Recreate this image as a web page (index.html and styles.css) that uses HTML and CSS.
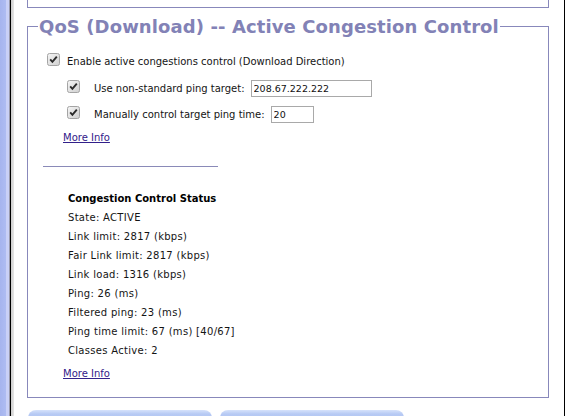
FILE: index.html
```html
<!DOCTYPE html>
<html>
<head>
<meta charset="utf-8">
<link rel="stylesheet" href="styles.css">
</head>
<body>
<div class="page">
  <div class="rail"></div>
  <div class="frame">
    <div class="prev"></div>
    <fieldset class="qos">
      <legend>QoS (Download) -- Active Congestion Control</legend>
      <div class="row r1"><svg class="cb" width="13" height="13" viewBox="0 0 13 13"><defs><linearGradient id="g1" x1="0" y1="0" x2="1" y2="1"><stop offset="0" stop-color="#f6f6f6"/><stop offset="1" stop-color="#cfcfcf"/></linearGradient></defs><rect x="0.5" y="0.5" width="12" height="12" rx="2" fill="url(#g1)" stroke="#a4a4a4"/><path d="M3.2 6.4 L5.4 8.8 L9.8 3.6" fill="none" stroke="#2b2b2b" stroke-width="1.9"/></svg><span class="lbl">Enable active congestions control (Download Direction)</span></div>
      <div class="row r2 sub"><svg class="cb" width="13" height="13" viewBox="0 0 13 13"><rect x="0.5" y="0.5" width="12" height="12" rx="2" fill="url(#g1)" stroke="#a4a4a4"/><path d="M3.2 6.4 L5.4 8.8 L9.8 3.6" fill="none" stroke="#2b2b2b" stroke-width="1.9"/></svg><span class="lbl">Use non-standard ping target:</span><input class="txt wide" type="text" value="208.67.222.222"></div>
      <div class="row r3 sub"><svg class="cb" width="13" height="13" viewBox="0 0 13 13"><rect x="0.5" y="0.5" width="12" height="12" rx="2" fill="url(#g1)" stroke="#a4a4a4"/><path d="M3.2 6.4 L5.4 8.8 L9.8 3.6" fill="none" stroke="#2b2b2b" stroke-width="1.9"/></svg><span class="lbl">Manually control target ping time:</span><input class="txt narrow" type="text" value="20"></div>
      <div class="row more-row"><a class="more" href="#">More Info</a></div>
      <hr class="sep">
      <div class="status">
        <div class="st-title">Congestion Control Status</div>
        <div class="st-line">State: ACTIVE</div>
        <div class="st-line">Link limit: 2817 (kbps)</div>
        <div class="st-line">Fair Link limit: 2817 (kbps)</div>
        <div class="st-line">Link load: 1316 (kbps)</div>
        <div class="st-line">Ping: 26 (ms)</div>
        <div class="st-line">Filtered ping: 23 (ms)</div>
        <div class="st-line">Ping time limit: 67 (ms) [40/67]</div>
        <div class="st-line">Classes Active: 2</div>
      </div>
      <div class="row more-row2"><a class="more" href="#">More Info</a></div>
    </fieldset>
    <div class="buttons"><span class="btn"></span><span class="btn"></span></div>
  </div>
</div>
</body>
</html>
```

FILE: styles.css
```css
html, body {
  margin: 0;
  padding: 0;
  background: #fff;
}
body {
  font-family: "DejaVu Sans", Verdana, sans-serif;
  font-size: 10px;
  color: #141414;
}
.page {
  display: flex;
  height: 416px;
  overflow: hidden;
}
.rail {
  width: 10px;
  flex: none;
  background: linear-gradient(to right, #a6b4ee 0, #aebcf2 6px, #c9d0f7 6px, #c9d0f7 9px, #9a9aac 9px, #9a9aac 10px);
}
.frame {
  width: 522px;
  flex: none;
  border-left: 1px solid #000;
  border-right: 1px solid #000;
  padding: 0 15px 0 16px;
  background: linear-gradient(to right, #cdcdcd 0, #e6e6e6 3px, #fff 3px) no-repeat;
}
.prev {
  height: 7px;
  border: 1px solid #8888bb;
  border-top: 0;
}
.qos {
  margin: 8px 0 0;
  padding: 0 14px 13px 10px;
  border: 1px solid #8888bb;
  min-width: 0;
}
.qos legend {
  padding: 0 1px;
  font-size: 18px;
  line-height: 21px;
  font-weight: bold;
  letter-spacing: 0.1px;
  color: #8282b6;
}
.row {
  line-height: 20px;
  white-space: nowrap;
}
.cb {
  vertical-align: baseline;
  margin-bottom: -1px;
}
.r1 {
  margin: 15px 0 0 9px;
}
.r1 .cb {
  margin-right: 7px;
}
.sub {
  margin-left: 29px;
}
.sub .cb {
  margin-right: 14px;
}
.r2 {
  margin-top: 7px;
}
.r3 {
  margin-top: 6px;
}
.txt {
  box-sizing: border-box;
  height: 17px;
  margin: 0 0 0 6px;
  padding: 0 2px;
  border: 1px solid #a9a9a9;
  font-family: "DejaVu Sans", Verdana, sans-serif;
  font-size: 9.5px;
  color: #111;
  background: #fff;
  vertical-align: baseline;
}
.wide {
  width: 121px;
}
.narrow {
  width: 43px;
}
.more-row {
  margin: 3px 0 0 25px;
}
.more {
  color: #32208a;
  text-decoration: underline;
}
.sep {
  border: 0;
  border-top: 1px solid #8a8ab8;
  height: 0;
  width: 175px;
  margin: 18px 0 0 5px;
}
.status {
  margin: 22px 0 0 30px;
  line-height: 19px;
}
.st-title {
  font-weight: bold;
  color: #000;
}
.st-line {
  letter-spacing: 0.3px;
}
.more-row2 {
  margin: 4px 0 0 25px;
}
.buttons {
  display: flex;
  gap: 8px;
  margin: 12px 0 0 1px;
}
.btn {
  width: 184px;
  height: 20px;
  border-radius: 8px 8px 0 0;
  background: linear-gradient(to bottom, #d6e2fb 0, #b7caf4 4px, #a9bff0 100%);
}
```
